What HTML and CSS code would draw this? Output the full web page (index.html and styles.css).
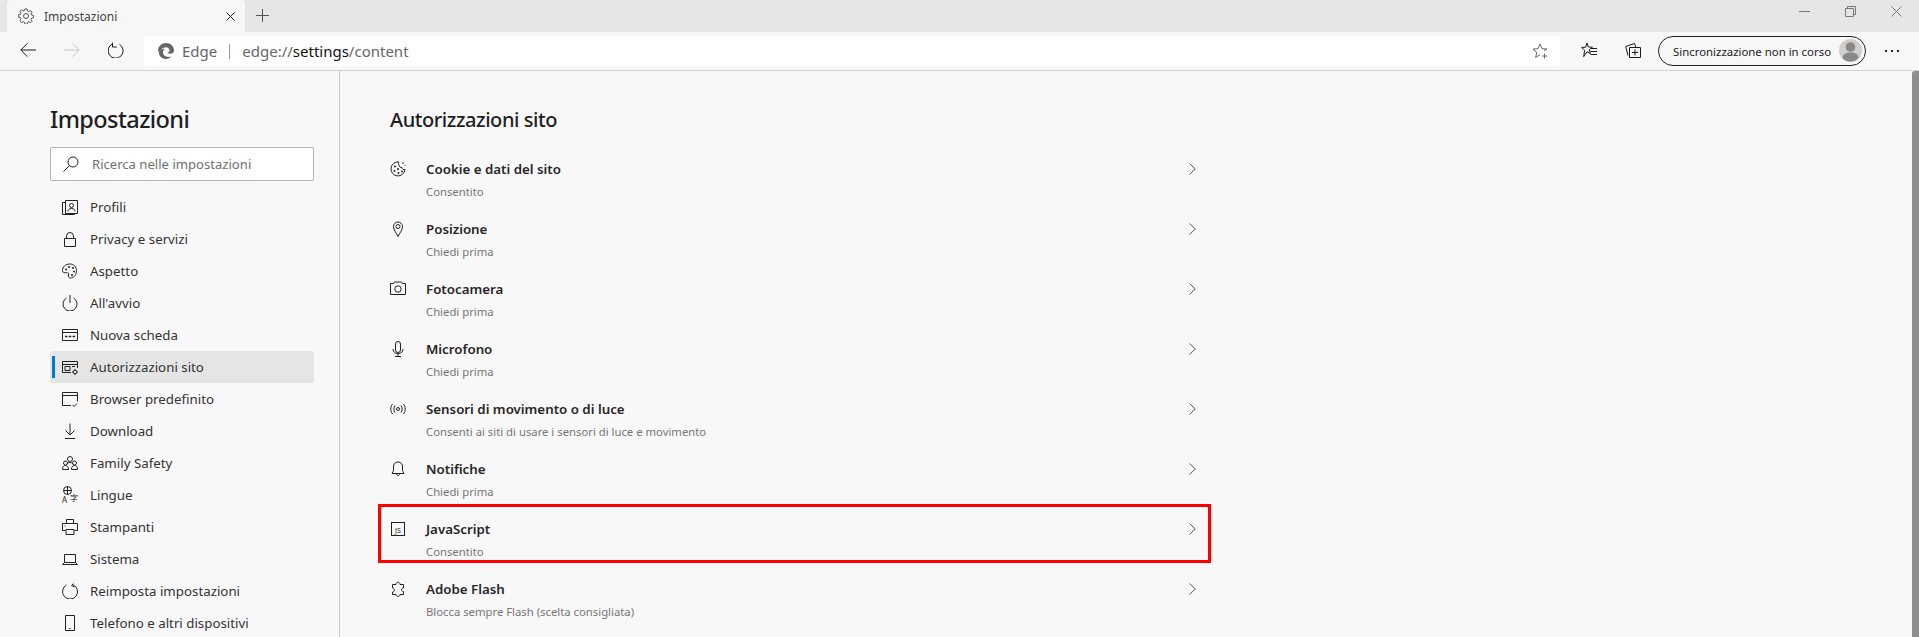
FILE: index.html
```html
<!DOCTYPE html>
<html lang="it">
<head>
<meta charset="utf-8">
<title>Impostazioni</title>
<link rel="stylesheet" href="styles.css">
</head>
<body>
<div class="tabstrip">
  <div class="tab">
    <svg class="tab-gear" viewBox="0 0 16 16"><path d="M6.900 1h2.200l.4 2 1.300.6 1.800-1.100 1.500 1.500-1.100 1.800.6 1.300 2 .4v2.200l-2 .4-.6 1.300 1.100 1.800-1.500 1.500-1.800-1.100-1.300.6-.4 2H6.900l-.4-2-1.300-.6-1.800 1.100L1.900 12.600 3 10.800l-.6-1.300-2-.4V6.900l2-.4.6-1.300-1.100-1.800L3.400 1.900l1.800 1.100 1.300-.6z"/><circle cx="8" cy="8" r="2.500"/></svg>
    <span class="tab-title">Impostazioni</span>
    <svg class="tab-close" viewBox="0 0 9 9"><path d="M.5.500l8 8M8.500.500l-8 8"/></svg>
  </div>
  <svg class="new-tab" viewBox="0 0 13 13"><path d="M6.500 0v13M0 6.500h13"/></svg>
  <div class="window-controls">
    <svg viewBox="0 0 11 11"><path d="M0 5.500h11"/></svg>
    <svg viewBox="0 0 11 11"><path d="M.5 2.500h8v8h-8zM2.500 2.500v-2h8v8h-2"/></svg>
    <svg viewBox="0 0 11 11"><path d="M.5.500l10 10M10.500.500l-10 10"/></svg>
  </div>
</div>

<div class="toolbar">
  <svg class="tb-icon" viewBox="0 0 16 16"><path d="M16 8H.8M7.500 1.300L.8 8l6.700 6.700"/></svg>
  <svg class="tb-icon tb-disabled" viewBox="0 0 16 16"><path d="M0 8h15.200M8.500 1.300L15.200 8l-6.700 6.700"/></svg>
  <svg class="tb-icon" viewBox="0 0 16 16"><path d="M11.500 1.800A7.500 7.500 0 1 1 4.500 1.400M4.500 .2v4.300h4.300" transform="translate(0 .5)"/></svg>
  <div class="address">
    <svg class="edge-logo" viewBox="0 0 16 16"><path class="edge-fill" d="M8 0c4.600 0 8 3.300 8 7.500 0 2.200-1.700 3.300-3.700 3.300-1.200 0-2.500-.4-3-.8 1.600-.4 2.200-1.500 2.200-2.500C11.500 5.500 10 4.200 7.800 4.200 4.700 4.200 2.600 6.700 1.200 9.500.7 8.800 0 8 0 7.500 .3 3.300 3.600 0 8 0z"/><path class="edge-fill" d="M.9 9.600C2 6.400 5 5.200 6.800 5.900c-1.300.9-1.800 2.100-1.800 3.400 0 3 2.700 5.700 8.300 4.300C12 15 10 16 7.800 16 3.900 16 1 13.300.9 9.600z"/></svg>
    <span class="scheme-label">Edge</span>
    <span class="addr-sep"></span>
    <span class="url">edge://<b>settings</b>/content</span>
    <svg class="addr-star" viewBox="0 0 16 16"><path d="M12 7.500l3-1.400-5-.4L8 1 6 5.700l-5 .4 3.800 3.300-1.200 5L8 11.700"/><path d="M12.500 10.500v5M10 13h5"/></svg>
  </div>
  <svg class="tb-icon fav" viewBox="0 0 16 16"><path d="M6 1l1.400 4 4 .2-3.100 2.500 1 4L6 9.700l-3.300 5 .9-6.500L.6 5.500l4-.3zM10 6.500h6M9.500 9.500H16M9.500 12.500H16"/></svg>
  <svg class="tb-icon coll" viewBox="0 0 16 16"><path d="M4.500 5.500h11v10h-11zM10 7.500v6M7 10.500h6M3 13.500L.7 4.500 9.500 1.500l1.200 3.500"/></svg>
  <div class="sync">
    <span class="sync-text">Sincronizzazione non in corso</span>
    <svg class="avatar" viewBox="0 0 23 23"><circle class="av-bg" cx="11.500" cy="11.500" r="11.500"/><circle class="av-fg" cx="11.500" cy="8" r="4.800"/><path class="av-fg" d="M3.500 19c0-3.800 3.500-5.500 8-5.500s8 1.700 8 5.500c-2 2.500-5 3.500-8 3.500s-6-1-8-3.500z"/></svg>
  </div>
  <div class="more"><i></i><i></i><i></i></div>
</div>

<div class="page">
  <aside class="sidebar">
    <h1>Impostazioni</h1>
    <div class="search">
      <svg viewBox="0 0 16 16"><circle cx="10" cy="6" r="5"/><path d="M6.500 9.500L.5 15.500"/></svg>
      <span>Ricerca nelle impostazioni</span>
    </div>
    <nav class="nav">
      <a class="nav-item"><svg viewBox="0 0 16 16"><path d="M3.500 1.500h12v13h-12zM3.500 3.500H.5v12h12v-1"/><circle cx="9.500" cy="6.500" r="2"/><path d="M6 12.500c0-2 1.500-3 3.500-3s3.500 1 3.500 3"/></svg>Profili</a>
      <a class="nav-item"><svg viewBox="0 0 16 16"><path d="M2.500 7.500h11v8h-11zM4.500 7.500V5a3.500 3.500 0 0 1 7 0v2.500"/></svg>Privacy e servizi</a>
      <a class="nav-item"><svg viewBox="0 0 16 16"><path d="M8 1C3.500 1 .5 4 .5 7.500c0 2 2 2.700 4 2.200 1.700-.4 2.600.7 2 2.300-.6 1.700.3 3 2 3 3.500 0 6-3.500 6-7.500C14.500 4 12 1 8 1z"/><circle class="dot" cx="4" cy="6.500" r="1"/><circle class="dot" cx="7" cy="4" r="1"/><circle class="dot" cx="11" cy="5" r="1"/><circle class="dot" cx="12" cy="8.500" r="1"/><circle class="dot" cx="10" cy="12" r="1"/></svg>Aspetto</a>
      <a class="nav-item"><svg viewBox="0 0 16 16"><path d="M8 0v8M4.500 3A7 7 0 1 0 11.500 3"/></svg>All'avvio</a>
      <a class="nav-item"><svg viewBox="0 0 16 16"><path d="M.5 2.500h15v11H.5zM.5 5.500h15"/><path class="thick" d="M3 9.500h2.500M6.800 9.500h2.500M10.600 9.500h2.500"/></svg>Nuova scheda</a>
      <a class="nav-item active"><svg viewBox="0 0 16 16"><path d="M9 13.500H.5v-11h15V9M.5 5.500h15M3 7.500h5v4H3zM10 7.500h3"/><circle cx="13" cy="13" r="1.800"/><path d="M13 10v1M13 15v1M10 13h1M15 13h1"/></svg>Autorizzazioni sito</a>
      <a class="nav-item"><svg viewBox="0 0 16 16"><path d="M9 14.500H.5v-13h15v9M.5 4.500h15M10.500 14l1.500 1.500 3-3"/></svg>Browser predefinito</a>
      <a class="nav-item"><svg viewBox="0 0 16 16"><path d="M8 .5v11M3.500 7.500L8 12l4.500-4.500M3 15.500h10"/></svg>Download</a>
      <a class="nav-item"><svg viewBox="0 0 16 16"><circle cx="8" cy="4" r="2.500"/><circle cx="3.500" cy="8" r="2"/><circle cx="12.500" cy="8" r="2"/><path d="M.5 14.500c0-2.500 1-4 3-4s3 1.500 3 4zM9.500 14.500c0-2.500 1-4 3-4s3 1.500 3 4zM5 9c1-2 5-2 6 0"/></svg>Family Safety</a>
      <a class="nav-item nav-lang"><svg class="lang-globe" viewBox="0 0 9 9"><circle cx="4.500" cy="4.500" r="4"/><path d="M.5 4.500h8M4.500 .5v8"/></svg><span class="lang-a">A</span><span class="lang-zi">字</span>Lingue</a>
      <a class="nav-item"><svg viewBox="0 0 16 16"><path d="M4.500 4.500v-4h7v4M3.500 11.500H.5v-7h15v7h-3M4 10.500h8v5H4zM2.500 7h1"/></svg>Stampanti</a>
      <a class="nav-item"><svg viewBox="0 0 16 16"><path d="M2.500 3.500h11v8h-11zM.5 13.500h15M2.500 11.500l-2 2M13.500 11.500l2 2"/></svg>Sistema</a>
      <a class="nav-item"><svg viewBox="0 0 16 16"><path d="M4.500 2A7.500 7.500 0 1 0 11 1.700M11.500 .5L9.500 2.500l3 1.500"/></svg>Reimposta impostazioni</a>
      <a class="nav-item"><svg viewBox="0 0 16 16"><path d="M3.500 .5h9v15h-9zM7 13.500h1.500"/></svg>Telefono e altri dispositivi</a>
    </nav>
  </aside>

  <main class="content">
    <h2>Autorizzazioni sito</h2>
    <div class="rows">
      <div class="row">
        <svg class="row-icon" viewBox="0 0 16 16"><path d="M9 1a7 7 0 1 0 6 7.500c-1.500.5-3-.5-3-2-1.500.3-3-1-3-2.500C8 3 8.500 2 9 1z"/><circle class="dot" cx="5" cy="5.500" r="1"/><circle class="dot" cx="4.500" cy="10" r="1"/><circle class="dot" cx="8" cy="8" r="1"/><circle class="dot" cx="8.500" cy="12" r="1"/><circle class="dot" cx="12" cy="10.500" r="1"/><circle class="dot" cx="13" cy="2" r=".8"/><circle class="dot" cx="15" cy="4.500" r=".6"/></svg>
        <div class="row-text"><div class="row-title">Cookie e dati del sito</div><div class="row-sub">Consentito</div></div>
        <svg class="chevron" viewBox="0 0 7 12"><path d="M.5.500L6.300 6 .5 11.500"/></svg>
      </div>
      <div class="row">
        <svg class="row-icon" viewBox="0 0 16 16"><path d="M8 15.500C6 11.500 3.500 9 3.500 5.500a4.500 4.500 0 0 1 9 0C12.500 9 10 11.500 8 15.500z"/><circle cx="8" cy="5.500" r="2"/></svg>
        <div class="row-text"><div class="row-title">Posizione</div><div class="row-sub">Chiedi prima</div></div>
        <svg class="chevron" viewBox="0 0 7 12"><path d="M.5.500L6.300 6 .5 11.500"/></svg>
      </div>
      <div class="row">
        <svg class="row-icon" viewBox="0 0 16 16"><path d="M.5 2.500h3l1-1.500h7l1 1.500h3v11H.5z"/><circle cx="8" cy="8" r="3.200"/></svg>
        <div class="row-text"><div class="row-title">Fotocamera</div><div class="row-sub">Chiedi prima</div></div>
        <svg class="chevron" viewBox="0 0 7 12"><path d="M.5.500L6.300 6 .5 11.500"/></svg>
      </div>
      <div class="row">
        <svg class="row-icon" viewBox="0 0 16 16"><path d="M5.500 3a2.500 2.500 0 0 1 5 0v6a2.500 2.500 0 0 1-5 0zM3 8c0 3 2 4.500 5 4.500S13 11 13 8M8 12.500v3M5 15.500h6"/></svg>
        <div class="row-text"><div class="row-title">Microfono</div><div class="row-sub">Chiedi prima</div></div>
        <svg class="chevron" viewBox="0 0 7 12"><path d="M.5.500L6.300 6 .5 11.500"/></svg>
      </div>
      <div class="row">
        <svg class="row-icon" viewBox="0 0 16 16"><circle cx="8" cy="8" r="1.500"/><path d="M5 4.500c-1.500 2-1.500 5 0 7M11 4.500c1.500 2 1.500 5 0 7M2.500 3C.2 6 .2 10 2.500 13M13.500 3c2.300 3 2.300 7 0 10"/></svg>
        <div class="row-text"><div class="row-title">Sensori di movimento o di luce</div><div class="row-sub">Consenti ai siti di usare i sensori di luce e movimento</div></div>
        <svg class="chevron" viewBox="0 0 7 12"><path d="M.5.500L6.300 6 .5 11.500"/></svg>
      </div>
      <div class="row">
        <svg class="row-icon" viewBox="0 0 16 16"><path d="M8 1C5 1 3.500 3 3.500 6v3.500L2 12.500h12l-1.500-3V6C12.500 3 11 1 8 1zM6.500 12.500c0 2.700 3 2.700 3 0"/></svg>
        <div class="row-text"><div class="row-title">Notifiche</div><div class="row-sub">Chiedi prima</div></div>
        <svg class="chevron" viewBox="0 0 7 12"><path d="M.5.500L6.300 6 .5 11.500"/></svg>
      </div>
      <div class="row">
        <div class="js"><span>JS</span></div>
        <div class="row-text"><div class="row-title">JavaScript</div><div class="row-sub">Consentito</div></div>
        <svg class="chevron" viewBox="0 0 7 12"><path d="M.5.500L6.300 6 .5 11.500"/></svg>
        <div class="highlight"></div>
      </div>
      <div class="row">
        <svg class="row-icon" viewBox="0 0 16 16"><path d="M6 3.500C6 .5 10 .5 10 3.500h3.500V7c-1.200 0-2 .7-2 1.700s.8 1.800 2 1.800v3H10c0 2.500-4 2.500-4 0H2.500V11c2.500 0 2.500-4 0-4V3.500z"/></svg>
        <div class="row-text"><div class="row-title">Adobe Flash</div><div class="row-sub">Blocca sempre Flash (scelta consigliata)</div></div>
        <svg class="chevron" viewBox="0 0 7 12"><path d="M.5.500L6.300 6 .5 11.500"/></svg>
      </div>
    </div>
  </main>
  <div class="scrollbar"><div class="thumb"></div></div>
</div>
</body>
</html>
```
FILE: styles.css
```css
* { box-sizing: border-box; }
html, body { margin: 0; height: 637px; overflow: hidden; }
body { font-family: "Noto Sans", "Open Sans", sans-serif; background: #f8f8f8; color: #333; font-size: 13.3px; }
svg { fill: none; stroke: currentColor; stroke-width: 1; flex: none; display: block; }
.dot { fill: currentColor; stroke: none; }
.thick { stroke-width: 1.500; }

.tabstrip { height: 32px; background: #e6e6e6; display: flex; align-items: flex-end; padding-left: 7px; }
.tab { width: 238px; height: 32px; background: #f7f7f7; border-radius: 4px 4px 0 0; display: flex; align-items: center; padding: 0 10px 0 11px; }
.tab-gear { width: 16px; height: 16px; color: #555; }
.tab-title { font-size: 12px; margin-left: 10px; flex: 1; color: #444; }
.tab-close { width: 9px; height: 9px; color: #222; margin-top: 1px; }
.new-tab { width: 13px; height: 13px; margin: 0 0 10px 11px; color: #555; }
.window-controls { margin-left: auto; height: 32px; display: flex; gap: 35px; padding: 6px 17px 0 0; color: #777; }
.window-controls svg { width: 11px; height: 11px; }

.toolbar { height: 39px; background: #f7f7f7; border-bottom: 1px solid #d2d2d2; display: flex; align-items: center; padding-left: 20px; }
.tb-icon { width: 16px; height: 16px; color: #1a1a1a; margin: -2px 28px 0 0; }
.tb-disabled { color: #c4c4c4; }
.address { width: 1416px; height: 30px; margin-left: -8px; background: #fff; border-radius: 4px; display: flex; align-items: center; padding: 0 12px 0 14px; }
.edge-logo { width: 16px; height: 16px; }
.edge-fill { fill: #666; stroke: none; }
.scheme-label { font-size: 15px; color: #666; margin-left: 8px; }
.addr-sep { width: 1px; height: 15px; background: #999; margin: 0 12px; }
.url { font-size: 15px; color: #666; flex: 1; }
.url b { font-weight: 400; color: #111; }
.addr-star { width: 16px; height: 16px; color: #666; }
.fav { margin-left: 21px; }
.coll { margin-right: 17px; }
.sync { width: 208px; height: 30px; border: 1px solid #222; border-radius: 15px; display: flex; align-items: center; justify-content: space-between; padding: 0 3px 0 14px; }
.sync-text { font-size: 11.400px; color: #222; white-space: nowrap; }
.avatar { width: 23px; height: 23px; stroke: none; margin-top: -1px; }
.av-bg { fill: #d0cfcd; }
.av-fg { fill: #8a8886; }
.more { display: flex; gap: 4px; margin-left: 19px; }
.more i { width: 2px; height: 2px; background: #222; }

.page { height: 566px; display: flex; background: #f8f8f8; }
.sidebar { width: 340px; flex: none; border-right: 1px solid #c8c8c8; padding: 32px 25px 0 50px; }
h1 { margin: 0; font-size: 23.500px; font-weight: 500; letter-spacing: -.6px; line-height: 32px; color: #1f1f1f; }
.search { height: 34px; margin-top: 12px; background: #fff; border: 1px solid #b5b5b5; border-radius: 2px; display: flex; align-items: center; padding-left: 12px; font-size: 13.100px; color: #707070; }
.search svg { width: 16px; height: 16px; color: #222; margin-right: 13px; }
.nav { margin-top: 10px; display: flex; flex-direction: column; }
.nav-item { height: 32px; display: flex; align-items: center; padding-left: 12px; border-radius: 2px; position: relative; color: #333; }
.nav-item svg { width: 16px; height: 16px; color: #222; margin-right: 12px; }
.nav-lang { padding-left: 40px; }
.nav-item .lang-globe { position: absolute; left: 13px; top: 7px; width: 9px; height: 9px; margin: 0; }
.lang-a, .lang-zi { position: absolute; color: #222; line-height: 8px; }
.lang-a { left: 12px; top: 17px; font-size: 8px; }
.lang-zi { left: 20px; top: 15px; font-size: 8px; font-family: "Noto Sans CJK SC", sans-serif; }
.active { background: #e5e5e5; }
.active::before { content: ""; position: absolute; left: 2px; top: 5px; bottom: 5px; width: 3px; background: #0078d4; }

.content { flex: 1; padding: 33px 0 0 50px; }
h2 { margin: 0; font-size: 20px; font-weight: 500; letter-spacing: -.43px; line-height: 32px; color: #1f1f1f; }
.rows { margin-top: 9px; width: 830px; margin-left: -10px; display: flex; flex-direction: column; }
.row { height: 60px; display: flex; align-items: center; padding: 0 14px 0 10px; position: relative; }
.row-icon { width: 16px; height: 16px; color: #222; margin-right: 20px; margin-top: -12px; }
.js { width: 14px; height: 14px; margin: -12px 21px 0 1px; border: 1px solid #222; display: flex; align-items: flex-end; justify-content: center; flex: none; font-size: 7px; line-height: 8px; color: #222; }
.row-text { flex: 1; padding-top: 8px; }
.row-title { font-size: 13.300px; font-weight: 600; line-height: 20px; color: #262626; }
.row-sub { font-size: 11.300px; line-height: 16px; margin-top: 5px; color: #767676; }
.chevron { width: 7px; height: 12px; color: #555; margin-top: -12px; }
.highlight { position: absolute; left: -2px; right: -1px; top: -1px; height: 59px; border: 3px solid #f00; }

.scrollbar { width: 7px; flex: none; }
.thumb { height: 100%; background: #8e8e8e; border-radius: 3px 0 0 0; }
```
